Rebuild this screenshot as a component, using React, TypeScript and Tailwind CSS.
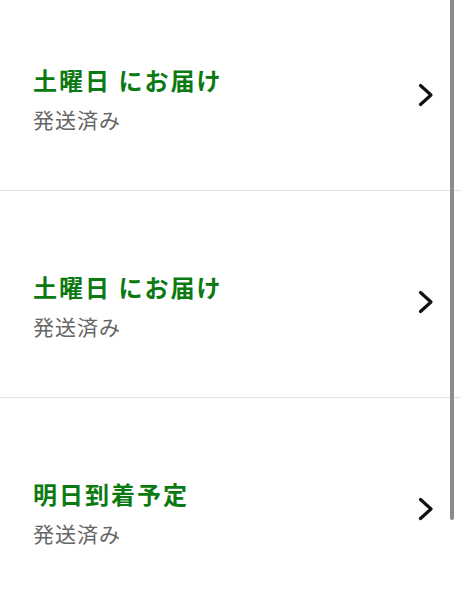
const items = [
  { title: '土曜日 にお届け', status: '発送済み' },
  { title: '土曜日 にお届け', status: '発送済み' },
  { title: '明日到着予定', status: '発送済み' },
];

function Chevron() {
  return (
    <svg width="16" height="24" viewBox="0 0 16 24" fill="none" className="mt-[19px] shrink-0">
      <polyline points="2.5,2.5 13,12 2.5,21.5" stroke="#111" strokeWidth="3.2" strokeLinecap="round" strokeLinejoin="round" />
    </svg>
  );
}

export default function App() {
  return (
    <div
      className="relative h-[600px] w-full overflow-hidden bg-white"
      style={{ fontFamily: '"Noto Sans CJK JP", "Noto Sans", sans-serif' }}
    >
      <div className="-mt-[16px] flex flex-col">
        {items.map((item, i) => (
          <div
            key={i}
            className="flex h-[207px] items-start justify-between border-b border-[#e2e2e2] pl-[33px] pr-[27px] pt-[80px]"
          >
            <div className="flex flex-col">
              <div className="text-[24px] font-bold leading-[32px] tracking-[2px] text-[#0b7a12]">{item.title}</div>
              <div className="mt-[9px] text-[21px] leading-[28px] tracking-[1px] text-[#666]">{item.status}</div>
            </div>
            <Chevron />
          </div>
        ))}
      </div>

      {/* scrollbar */}
      <div className="absolute right-[7px] -top-2 h-[528px] w-[4px] rounded-full bg-[#8c8c8c]" />
    </div>
  );
}
